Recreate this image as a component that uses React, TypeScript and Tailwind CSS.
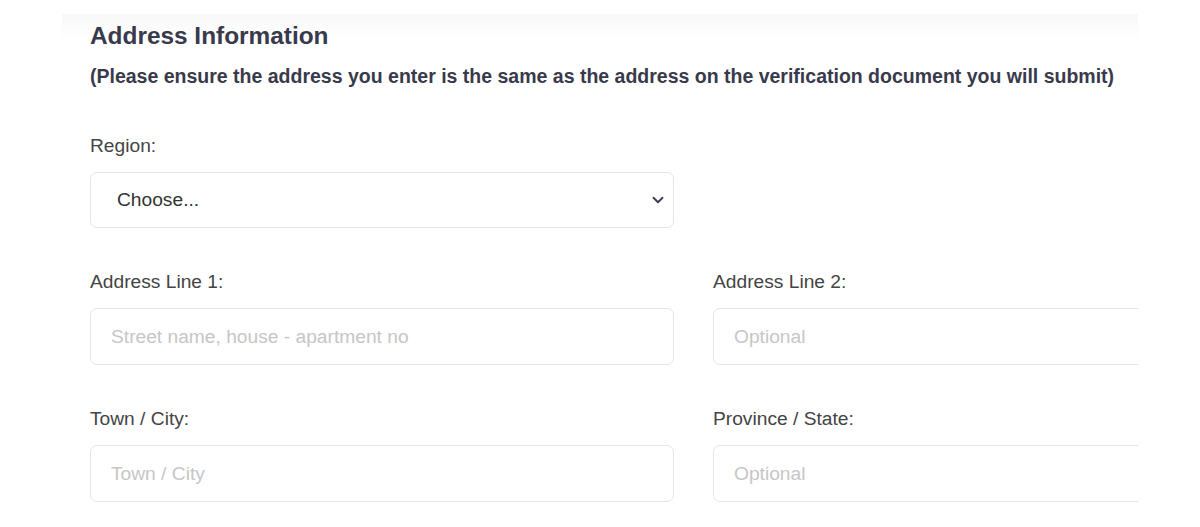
import { ChevronDown } from 'lucide-react'

const fields = [
  { label: 'Address Line 1:', placeholder: 'Street name, house - apartment no' },
  { label: 'Address Line 2:', placeholder: 'Optional' },
  { label: 'Town / City:', placeholder: 'Town / City' },
  { label: 'Province / State:', placeholder: 'Optional' },
]

export default function App() {
  return (
    <div className="min-h-[527px] bg-white pt-[14px] font-['Liberation_Sans',Arial,sans-serif]">
      {/* card with faint top shade, right column runs past its edge */}
      <div className="mx-[62px] overflow-hidden bg-[linear-gradient(to_bottom,#f8f8f8,#ffffff_26px)] pl-[28px] pt-[7px]">
        <h2 className="text-[24.4px] leading-[30px] font-bold text-[#383a4c]">Address Information</h2>
        <p className="mt-[13px] text-[19.5px] leading-[24px] font-bold text-[#383a4c]">
          (Please ensure the address you enter is the same as the address on the verification document you will submit)
        </p>

        <div className="mt-[47px] w-[584px]">
          <label className="block text-[19.2px] leading-[22px] text-[#444]">Region:</label>
          <div className="relative mt-[15px]">
            <select className="h-[56px] w-full appearance-none rounded-[7px] border border-[#e3e3ef] bg-white pl-[26px] text-[19.2px] text-[#333] outline-none">
              <option>Choose...</option>
            </select>
            <ChevronDown className="pointer-events-none absolute right-[7px] top-[19px] h-[18px] w-[18px] text-[#3b3b4f]" strokeWidth={2.4} />
          </div>
        </div>

        <div className="mt-[43px] grid w-[1207px] grid-cols-[584px_584px] gap-x-[39px] gap-y-[43px]">
          {fields.map((f) => (
            <div key={f.label}>
              <label className="block text-[19.2px] leading-[22px] text-[#444]">{f.label}</label>
              <input
                type="text"
                placeholder={f.placeholder}
                className="mt-[15px] h-[57px] w-full rounded-[7px] border border-[#e3e3ef] bg-white px-[20px] text-[19.2px] text-[#333] outline-none placeholder:text-[#c6c6c6]"
              />
            </div>
          ))}
        </div>
      </div>
    </div>
  )
}
